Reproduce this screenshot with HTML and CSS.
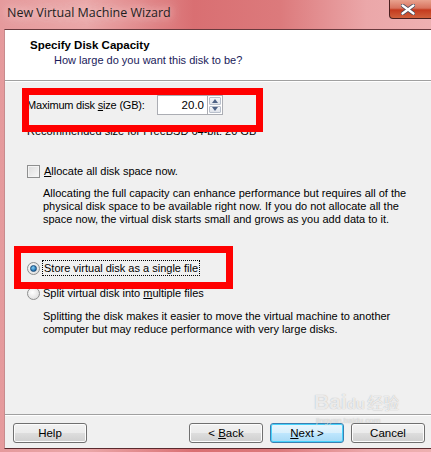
FILE: index.html
```html
<!DOCTYPE html>
<html lang="en">
<head>
  <meta charset="UTF-8" />
  <title>New Virtual Machine Wizard</title>
  <link rel="stylesheet" href="styles.css">
</head>
<body>

  <div class="window">
    <div class="titlebar">
      <span class="title">New Virtual Machine Wizard</span>
      <div class="close-btn">
        <svg width="14" height="11" viewBox="0 0 14 11">
          <path d="M1.5 1.5 L12.5 9.5 M12.5 1.5 L1.5 9.5" stroke="#4a4a5a" stroke-width="4" stroke-linecap="round"/>
          <path d="M1.5 1.5 L12.5 9.5 M12.5 1.5 L1.5 9.5" stroke="#fff" stroke-width="2.2" stroke-linecap="round"/>
        </svg>
      </div>
    </div>

    <div class="client">
      <div class="header">
        <div class="header-title">Specify Disk Capacity</div>
        <div class="header-sub">How large do you want this disk to be?</div>
      </div>

      <div class="main">
        <div class="size-row">
          <label>Maximum disk <u>s</u>ize (GB):</label>
          <div class="spin">
            <input type="text" value="20.0">
            <div class="spin-btns">
              <div class="spin-btn"><span class="arrow up"></span></div>
              <div class="spin-btn"><span class="arrow down"></span></div>
            </div>
          </div>
        </div>
        <div class="recommend">Recommended size for FreeBSD 64-bit: 20 GB</div>

        <div class="option check-row">
          <span class="checkbox"></span>
          <span><u>A</u>llocate all disk space now.</span>
        </div>
        <p class="note">Allocating the full capacity can enhance performance but requires all of the physical disk space to be available right now. If you do not allocate all the space now, the virtual disk starts small and grows as you add data to it.</p>

        <div class="option radio-row first">
          <span class="radio checked"></span>
          <span class="focus">Store virtual disk as a single file</span>
        </div>
        <div class="option radio-row">
          <span class="radio"></span>
          <span>Split virtual disk into <u>m</u>ultiple files</span>
        </div>
        <p class="note">Splitting the disk makes it easier to move the virtual machine to another computer but may reduce performance with very large disks.</p>
      </div>

      <div class="footer">
        <button class="btn">Help</button>
        <div class="nav">
          <button class="btn">&lt; <u>B</u>ack</button>
          <button class="btn default"><u>N</u>ext &gt;</button>
          <button class="btn">Cancel</button>
        </div>
      </div>
    </div>
  </div>

  <div class="mark mark-size"></div>
  <div class="mark mark-store"></div>

  <div class="watermark">
    <span class="wm-bai">Bai</span><span class="wm-paw">du</span><span class="wm-cn">经验</span>
    <div class="wm-url">jingyan.baidu.com</div>
  </div>

</body>
</html>
```

FILE: styles.css
```css
html, body {
  margin: 0;
  padding: 0;
}
body {
  width: 431px;
  height: 452px;
  overflow: hidden;
  position: relative;
  font-family: "Liberation Sans", Arial, sans-serif;
  font-size: 11px;
  color: #000;
}
.window {
  height: 452px;
  display: flex;
  flex-direction: column;
  padding-left: 4px;
  padding-bottom: 3px;
  box-sizing: border-box;
  background: linear-gradient(90deg, #e59a9c 0%, #eaa7a8 20%, #d96f72 45%, #dc7a7c 65%, #eba7a9 85%, #eeb0b1 100%);
}
.titlebar {
  height: 29px;
  display: flex;
  align-items: flex-start;
  flex-shrink: 0;
}
.title {
  margin: 4px 0 0 3px;
  font-family: "Open Sans", "Noto Sans", sans-serif;
  font-size: 12.5px;
  color: #1e1e1e;
  text-shadow: 0 0 8px #f4d0d0, 0 0 12px #f4d0d0;
}
.close-btn {
  margin-left: auto;
  margin-right: -6px;
  width: 48px;
  height: 19px;
  box-sizing: border-box;
  border: 1px solid #4a1f1f;
  border-top: none;
  border-radius: 0 0 4px 4px;
  background: linear-gradient(180deg, #e9a28e 0%, #d8735e 45%, #c43a1e 55%, #d0603c 100%);
  display: flex;
  align-items: center;
  justify-content: center;
  padding-right: 10px;
}
.client {
  flex: 1;
  display: flex;
  flex-direction: column;
  background: #f0f0f0;
  border-top: 1px solid #6a3a3e;
  border-left: 1px solid #c88b8d;
  border-bottom: 1px solid #5a2a2e;
}
.header {
  height: 51px;
  background: #fff;
  border-bottom: 1px solid #a0a0a0;
  box-shadow: 0 1px 0 #fff;
  box-sizing: border-box;
  padding: 9px 0 0 25px;
}
.header-title {
  font-weight: bold;
  font-size: 11.5px;
  color: #000;
}
.header-sub {
  margin: 3px 0 0 24px;
  color: #1a1a5a;
}
.main {
  flex: 1;
  padding: 14px 0 0 22px;
}
.size-row {
  display: flex;
  align-items: center;
  height: 20px;
}
.size-row label {
  width: 130px;
  letter-spacing: -0.2px;
}
.spin {
  display: flex;
  height: 20px;
}
.spin input {
  width: 50px;
  height: 20px;
  box-sizing: border-box;
  border: 1px solid #abadb3;
  border-right: none;
  padding: 0 3px 0 0;
  text-align: right;
  font-family: inherit;
  font-size: 11.5px;
  background: #fff;
}
.spin-btns {
  width: 16px;
  display: flex;
  flex-direction: column;
  border: 1px solid #abadb3;
  box-sizing: border-box;
  background: #fff;
  padding: 1px;
  gap: 1px;
}
.spin-btn {
  flex: 1;
  border: 1px solid #b9c0cc;
  border-radius: 1px;
  background: linear-gradient(180deg, #f6f7fa, #dfe3ea);
  display: flex;
  align-items: center;
  justify-content: center;
}
.arrow {
  width: 0;
  height: 0;
  border-left: 3.5px solid transparent;
  border-right: 3.5px solid transparent;
}
.arrow.up {
  border-bottom: 4px solid #4d6185;
}
.arrow.down {
  border-top: 4px solid #4d6185;
}
.recommend {
  margin-top: 9px;
  line-height: 14px;
}
.option {
  display: flex;
  align-items: center;
  height: 14px;
}
.check-row {
  margin-top: 26px;
}
.checkbox {
  width: 13px;
  height: 13px;
  box-sizing: border-box;
  border: 1px solid #8e8f8f;
  background: linear-gradient(135deg, #dcdcdc, #f8f8f8);
  box-shadow: inset 0 0 0 1px #f4f4f4;
  margin-right: 4px;
}
.note {
  margin: 9px 0 0 16px;
  line-height: 13px;
  width: 365px;
}
.radio-row {
  height: 16px;
  margin-top: 9px;
}
.radio-row.first {
  margin-top: 34px;
}
.radio {
  width: 13px;
  height: 13px;
  box-sizing: border-box;
  border-radius: 50%;
  border: 1px solid #8e8f8f;
  background: radial-gradient(circle at 40% 40%, #ffffff, #d6d6d6);
  margin-right: 3px;
  display: flex;
  align-items: center;
  justify-content: center;
}
.radio.checked::after {
  content: "";
  width: 5px;
  height: 5px;
  border-radius: 50%;
  background: radial-gradient(circle at 40% 35%, #8ad1f5, #1d6fb0 70%, #10457a);
  border: 1px solid #1d4d7a;
}
.focus {
  outline: 1px dotted #000;
  padding: 0 1px;
  line-height: 14px;
}
.footer {
  height: 34px;
  border-top: 1px solid #a0a0a0;
  box-shadow: inset 0 1px 0 #fff;
  display: flex;
  align-items: flex-start;
  padding: 8px 6px 0 8px;
  box-sizing: border-box;
}
.nav {
  margin-left: auto;
  display: flex;
  gap: 7px;
}
.btn {
  width: 74px;
  height: 20px;
  padding: 0;
  font-family: inherit;
  font-size: 11.5px;
  color: #000;
  border: 1px solid #707070;
  border-radius: 3px;
  background: linear-gradient(180deg, #f2f2f2 0%, #ebebeb 48%, #dddddd 52%, #cfcfcf 100%);
  box-shadow: inset 0 0 0 1px #fcfcfc;
}
.btn.default {
  border-color: #3c7fb1;
  background: linear-gradient(180deg, #eaf6fd 0%, #d9f0fc 48%, #bee6fd 52%, #a7d9f5 100%);
  box-shadow: inset 0 0 0 1px #48d2fb;
}
.mark {
  position: absolute;
  border: 7px solid #ff0000;
  box-sizing: border-box;
}
.mark-size {
  left: 22px;
  top: 88px;
  width: 241px;
  height: 44px;
}
.mark-store {
  left: 14px;
  top: 246px;
  width: 219px;
  height: 43px;
}
.watermark {
  position: absolute;
  left: 314px;
  top: 391px;
  color: rgba(255, 255, 255, 0.75);
  text-shadow: 0 0 1px rgba(120, 120, 120, 0.6);
  font-family: "Liberation Sans", sans-serif;
  pointer-events: none;
  line-height: 22px;
}
.wm-bai {
  font-size: 21px;
  font-weight: bold;
}
.wm-paw {
  font-size: 15px;
  font-weight: bold;
}
.wm-cn {
  font-family: "Noto Sans CJK SC", sans-serif;
  font-size: 16px;
  margin-left: 2px;
}
.wm-url {
  font-size: 8px;
  line-height: 9px;
  color: rgba(255, 255, 255, 0.6);
  padding-left: 2px;
}
```
